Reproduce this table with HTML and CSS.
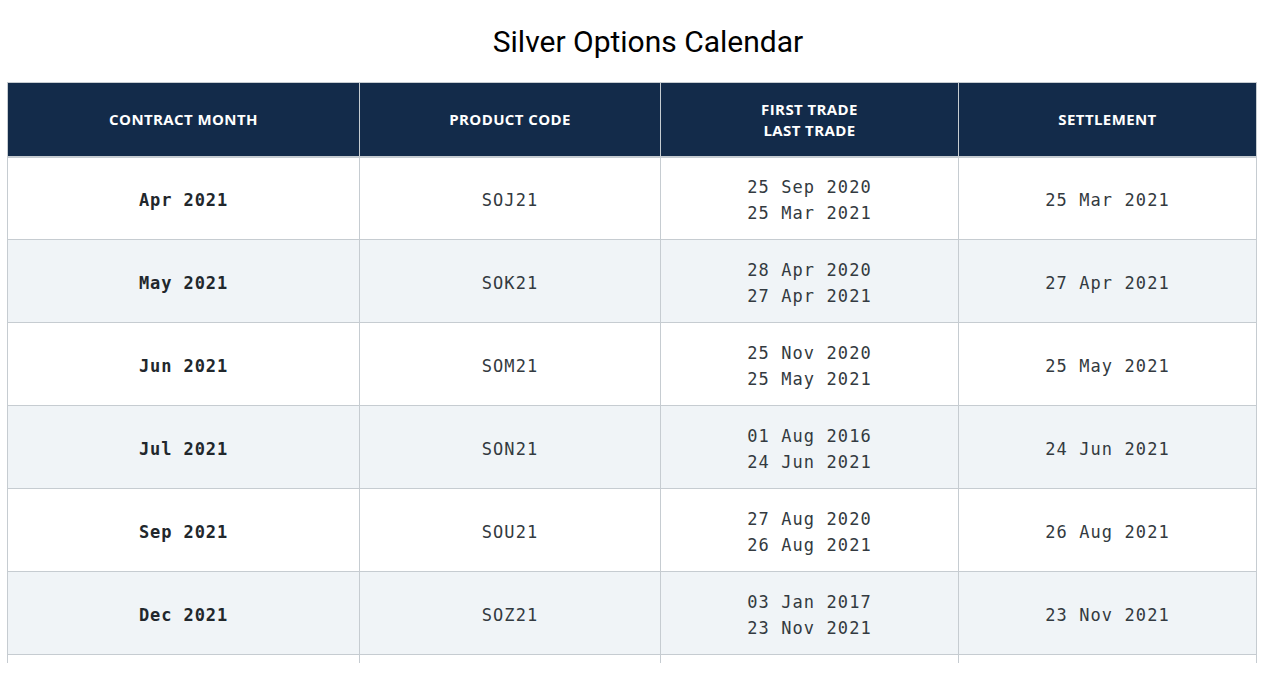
FILE: index.html
```html
<!DOCTYPE html>
<html>
<head>
<meta charset="utf-8">
<link rel="stylesheet" href="styles.css">
</head>
<body>
<h1 class="title">Silver Options Calendar</h1>
<div class="frame">
<table class="cal">
  <colgroup>
    <col class="c1"><col class="c2"><col class="c3"><col class="c4">
  </colgroup>
  <thead>
    <tr>
      <th>CONTRACT MONTH</th>
      <th>PRODUCT CODE</th>
      <th>FIRST TRADE<br>LAST TRADE</th>
      <th>SETTLEMENT</th>
    </tr>
  </thead>
  <tbody>
    <tr><td class="month">Apr 2021</td><td>SOJ21</td><td>25 Sep 2020<br>25 Mar 2021</td><td>25 Mar 2021</td></tr>
    <tr><td class="month">May 2021</td><td>SOK21</td><td>28 Apr 2020<br>27 Apr 2021</td><td>27 Apr 2021</td></tr>
    <tr><td class="month">Jun 2021</td><td>SOM21</td><td>25 Nov 2020<br>25 May 2021</td><td>25 May 2021</td></tr>
    <tr><td class="month">Jul 2021</td><td>SON21</td><td>01 Aug 2016<br>24 Jun 2021</td><td>24 Jun 2021</td></tr>
    <tr><td class="month">Sep 2021</td><td>SOU21</td><td>27 Aug 2020<br>26 Aug 2021</td><td>26 Aug 2021</td></tr>
    <tr><td class="month">Dec 2021</td><td>SOZ21</td><td>03 Jan 2017<br>23 Nov 2021</td><td>23 Nov 2021</td></tr>
    <tr><td></td><td></td><td></td><td></td></tr>
  </tbody>
</table>
</div>
</body>
</html>
```

FILE: styles.css
```css
html, body {
  margin: 0;
  padding: 0;
  background: #ffffff;
  overflow: hidden;
  height: 673px;
}

.title {
  margin: 0;
  padding: 24px 0 0 23px;
  height: 57px;
  box-sizing: border-box;
  text-align: center;
  font-family: Roboto, "Noto Sans", sans-serif;
  font-weight: 400;
  font-size: 30px;
  line-height: 36px;
  color: #000000;
}

.frame {
  margin: 25px 0 0 7px;
  width: 1250px;
  height: 581px;
  overflow: hidden;
}

.cal {
  width: 1250px;
  border-collapse: collapse;
  table-layout: fixed;
}

.c1 { width: 352px; }
.c2 { width: 301px; }
.c3 { width: 298px; }
.c4 { width: 298px; }

.cal th {
  background: #132b4a;
  color: #ffffff;
  font-family: "Open Sans", Lato, sans-serif;
  font-weight: 700;
  font-size: 15px;
  letter-spacing: 0.4px;
  line-height: 21px;
  height: 74px;
  box-sizing: border-box;
  padding: 1px 0 0;
  border: 1px solid #c6ccd1;
  border-bottom: 2px solid #c6ccd1;
  text-align: center;
  vertical-align: middle;
}

.cal td {
  height: 83px;
  box-sizing: border-box;
  padding: 4px 0 0;
  border: 1px solid #c6ccd1;
  text-align: center;
  vertical-align: middle;
  font-family: "DejaVu Sans Mono", "Liberation Mono", monospace;
  font-size: 17px;
  line-height: 26px;
  color: #333a40;
  letter-spacing: 1.1px;
}

.cal tbody tr:nth-child(even) td {
  background: #f0f4f7;
}

.cal td.month {
  font-weight: 700;
  color: #22272c;
  letter-spacing: 0.9px;
}
```
